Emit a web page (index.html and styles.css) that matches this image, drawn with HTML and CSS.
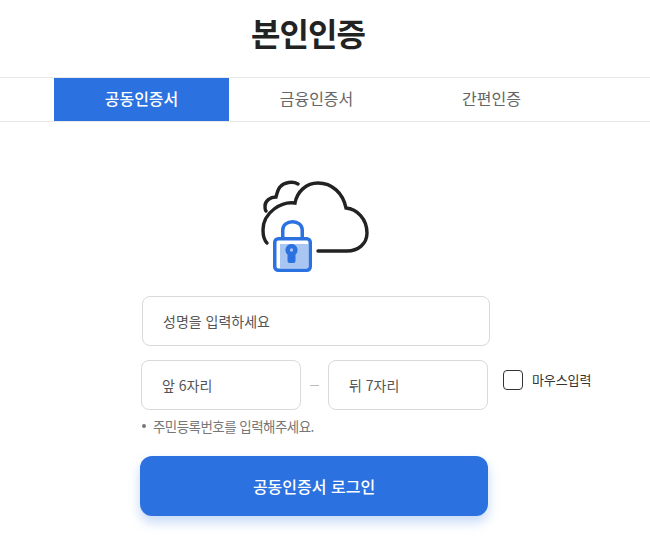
FILE: index.html
```html
<!DOCTYPE html>
<html lang="ko">
<head>
    <meta charset="UTF-8">
    <title>본인인증</title>
    <link rel="stylesheet" href="styles.css">
</head>
<body>
    <h1 class="page-title">본인인증</h1>
    <div class="tab-bar">
        <a class="tab active">공동인증서</a>
        <a class="tab">금융인증서</a>
        <a class="tab">간편인증</a>
    </div>
    <div class="cert-icon">
        <svg width="110" height="96" viewBox="0 0 110 96" fill="none">
            <path d="M58 71H87C98 71 107 64 107 53C107 39 97 29 86 28C83 13 72 3 58 3C46 3 37 12 35 23C22 21 3 32 3 50C3 55 4 60 7 63" stroke="#222" stroke-width="3.4" stroke-linecap="round"/>
            <path d="M38 4C33 1 24 2 20 7C18 9 17 13 16 17C10 17 5 21 5 26C5 28 5 30 6 31" stroke="#222" stroke-width="3.4" stroke-linecap="round"/>
            <rect x="13" y="57" width="39" height="35" rx="4" fill="#fff"/>
            <rect x="20" y="64" width="28" height="24" fill="#a9c6f2"/>
            <path d="M22.750 58V50C22.750 45 27 41.750 32.500 41.750C38 41.750 42.250 45 42.250 50V58" stroke="#2b72e0" stroke-width="3.500"/>
            <rect x="14.750" y="58.750" width="35.500" height="31.500" rx="3.500" stroke="#2b72e0" stroke-width="3.500"/>
            <path d="M31.500 64A6 6 0 0 1 35.500 74.500V81Q35.500 83 33.500 83H29.500Q27.500 83 27.500 81V74.500A6 6 0 0 1 31.500 64Z" fill="#2b72e0"/>
            <circle cx="31.500" cy="70" r="1.700" fill="#a9c6f2"/>
        </svg>
    </div>
    <div class="form">
        <input class="field name-field" placeholder="성명을 입력하세요">
        <div class="rrn-row">
            <input class="field rrn-field" placeholder="앞 6자리">
            <span class="dash"></span>
            <input class="field rrn-field" placeholder="뒤 7자리">
            <label class="mouse-check"><span class="check-box"></span>마우스입력</label>
        </div>
        <p class="hint">주민등록번호를 입력해주세요.</p>
        <button class="login-btn">공동인증서 로그인</button>
    </div>
</body>
</html>
```

FILE: styles.css
```css
* { box-sizing: border-box; }
body { margin: 0; background: #fff; color: #333; font-family: "Noto Sans CJK KR", "Noto Sans", sans-serif; height: 553px; overflow: hidden; }
.page-title { margin: 0; width: 616px; height: 77px; font-size: 32px; font-weight: 700; line-height: 65px; letter-spacing: -1px; color: #222; text-align: center; }
.tab-bar { display: flex; height: 45px; padding-left: 54px; border-top: 1px solid #e8e8e8; border-bottom: 1px solid #e8e8e8; }
.tab { width: 175px; height: 43px; font-size: 16px; line-height: 41px; text-align: center; color: #666; }
.tab.active { background: #2b72e0; color: #fff; font-weight: 500; }
.cert-icon { display: flex; justify-content: center; margin-top: 58px; padding-right: 20px; height: 96px; }
.form { width: 370px; margin-left: 140px; margin-top: 20px; }
.field { display: block; height: 50px; padding: 0 20px; border: 1px solid #d9d9d9; border-radius: 8px; font-family: inherit; font-size: 14px; color: #333; outline: none; }
.field::placeholder { color: #555; opacity: 1; }
.name-field { width: 348px; margin-left: 2px; }
.rrn-row { display: flex; align-items: center; margin-top: 14px; margin-left: 1px; width: 470px; }
.rrn-field { width: 160px; }
.dash { width: 9px; height: 1px; margin: 0 9px; background: #bbb; }
.mouse-check { display: flex; align-items: center; gap: 9px; margin-left: 15px; margin-top: -10px; font-size: 13px; line-height: 18px; letter-spacing: -0.1px; color: #333; white-space: nowrap; }
.check-box { width: 20px; height: 20px; border: 1px solid #333; border-radius: 4px; }
.hint { display: flex; align-items: center; gap: 7px; margin: 6px 0 0 2px; font-size: 13.5px; line-height: 20px; letter-spacing: -0.55px; color: #777; }
.hint::before { content: ""; width: 4px; height: 4px; border-radius: 50%; background: #777; }
.login-btn { display: block; width: 348px; height: 60px; margin-top: 20px; border: 0; border-radius: 12px; background: #2b72e0; color: #fff; font-family: inherit; font-size: 16px; font-weight: 500; box-shadow: 0 6px 12px rgba(43, 114, 224, 0.28); }
```
